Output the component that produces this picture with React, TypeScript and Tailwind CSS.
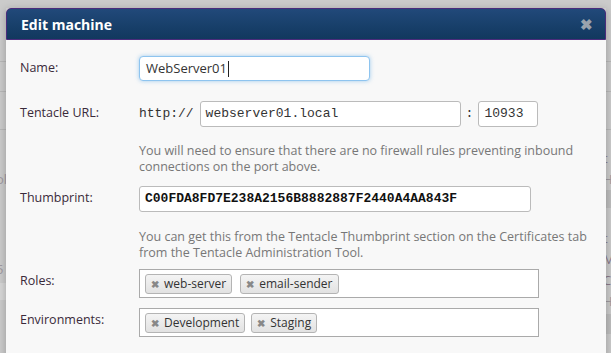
import React from "react";

const sans = "font-['Open_Sans',sans-serif]";
const mono = "font-['Liberation_Mono',monospace]";

function Tag({ label }: { label: string }) {
  return (
    <span className="flex items-center gap-[5px] h-[20px] px-[5px] rounded-[3px] border border-[#b4b4b4] bg-gradient-to-b from-[#f4f4f4] to-[#e2e2e2] text-[12px] text-[#333] leading-none">
      <span className="text-[10px] font-bold text-[#888]">✖</span>
      {label}
    </span>
  );
}

function Row({ label, children, className = "" }: { label: string; children: React.ReactNode; className?: string }) {
  return (
    <div className={`flex ${className}`}>
      <div className="w-[119px] shrink-0 pt-[3px] text-[#3a2a3a]">{label}</div>
      <div className="flex-1">{children}</div>
    </div>
  );
}

export default function App() {
  return (
    <div className={`relative w-[611px] h-[353px] overflow-hidden bg-[#cbcbcb] ${sans}`}>
      {/* dimmed page behind the dialog */}
      <div className="flex flex-col text-[13px] text-[#a09aa0]">
        <div className="h-[62px] border-b border-[#b8b8b8]" />
        <div className="h-[30px] border-b border-[#b8b8b8]" />
        <div className="h-[38px] border-b border-[#b8b8b8]" />
        <div className="flex justify-between h-[223px]">
          <div className="flex flex-col pt-[40px] -ml-[4px]">
            <span>ol</span>
            <span className="mt-[70px]">5</span>
            <div className="mt-[4px] w-[10px] h-[17px] bg-[#d6d6d6]" />
          </div>
          <div className="flex flex-col w-[8px] pt-[18px] leading-[21px]">
            <span className="text-[#8a7a8a]">t</span>
            <span>H</span>
            <div className="w-[8px] h-[18px] bg-[#bdbdbd]" />
            <span className="mt-[20px] text-[#8a7a8a]">t</span>
            <span className="text-[#8a7a8a]">M</span>
            <span className="text-[#8a7a8a]">C</span>
            <span>H</span>
            <div className="mt-[2px] w-[8px] h-[20px] bg-[#bdbdbd]" />
          </div>
        </div>
      </div>

      {/* dialog */}
      <div className="absolute left-[6px] top-[8px] w-[600px] h-[360px] flex flex-col shadow-[0_2px_8px_rgba(0,0,0,0.25)]">
        <div className="h-[32px] flex items-center justify-between px-[14px] rounded-t-[5px] border border-[#4a2c7c] bg-gradient-to-b from-[#21497a] to-[#11385e]">
          <span className="text-[14px] font-bold text-white">Edit machine</span>
          <span className="text-[15px] font-bold text-[#9aa3ad] leading-none -mr-[2px]">✖</span>
        </div>
        <div className="flex-1 bg-[#f8f8f8] px-[14px] pt-[16px] text-[12.5px]">
          <Row label="Name:">
            <div className="w-[231px] h-[25px] flex items-center px-[6px] rounded-[4px] border border-[#8ec4ef] bg-white shadow-[0_0_4px_rgba(102,175,233,0.6)] text-[13px] text-[#333]">
              WebServer01<span className="w-px h-[16px] bg-[#222] ml-px" />
            </div>
          </Row>

          <Row label="Tentacle URL:" className="mt-[20px]">
            <div className="flex items-center">
              <span className={`${mono} text-[13px] text-[#333]`}>http://</span>
              <div className={`ml-[6px] w-[261px] h-[26px] flex items-center px-[5px] rounded-[3px] border border-[#bbb] bg-white ${mono} text-[13px] text-[#333]`}>
                webserver01.local
              </div>
              <span className={`${mono} text-[13px] text-[#333] ml-[5px]`}>:</span>
              <div className={`ml-[5px] w-[60px] h-[26px] flex items-center px-[5px] rounded-[3px] border border-[#bbb] bg-white ${mono} text-[13px] text-[#333]`}>
                10933
              </div>
            </div>
            <p className="mt-[16px] text-[#777] leading-[16px]">
              You will need to ensure that there are no firewall rules preventing inbound connections on the port above.
            </p>
          </Row>

          <Row label="Thumbprint:" className="mt-[11px]">
            <div className={`w-[392px] h-[26px] flex items-center px-[5px] rounded-[3px] border border-[#bbb] bg-white ${mono} font-bold text-[13px] text-[#111]`}>
              C00FDA8FD7E238A2156B8882887F2440A4AA843F
            </div>
            <p className="mt-[17px] text-[#777] leading-[16px]">
              You can get this from the Tentacle Thumbprint section on the Certificates tab from the Tentacle Administration Tool.
            </p>
          </Row>

          <Row label="Roles:" className="mt-[8px]">
            <div className="w-[400px] h-[29px] flex items-center gap-[8px] px-[5px] border border-[#aaa] bg-white">
              <Tag label="web-server" />
              <Tag label="email-sender" />
            </div>
          </Row>

          <Row label="Environments:" className="mt-[10px]">
            <div className="w-[400px] h-[29px] flex items-center gap-[6px] px-[5px] border border-[#aaa] bg-white">
              <Tag label="Development" />
              <Tag label="Staging" />
            </div>
          </Row>
        </div>
      </div>
    </div>
  );
}
